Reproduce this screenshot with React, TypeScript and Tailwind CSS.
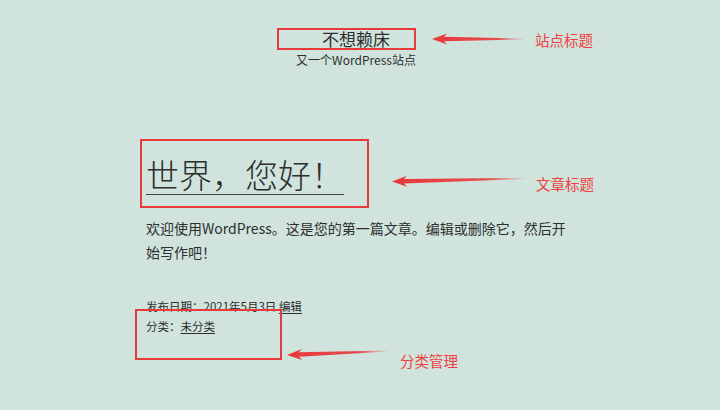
import React from 'react';

const RED = '#e8393b';

// hand-drawn style annotation arrow, tip on the left
function Arrow({ length, tilt = 0, id }: { length: number; tilt?: number; id: string }) {
  const h = 16;
  const mid = h / 2;
  return (
    <svg width={length} height={h} viewBox={`0 0 ${length} ${h}`} style={{ transform: `rotate(${tilt}deg)` }}>
      <defs>
        <linearGradient id={id} x1="0" x2="1" y1="0" y2="0">
          <stop offset="0" stopColor={RED} />
          <stop offset="0.7" stopColor={RED} stopOpacity="0.9" />
          <stop offset="1" stopColor={RED} stopOpacity="0" />
        </linearGradient>
      </defs>
      <path
        d={`M1 ${mid} L16 ${mid - 5.5} L13 ${mid - 2.2} L${length} ${mid - 0.5} L${length} ${mid + 0.5} L13 ${mid + 2.2} L16 ${mid + 5.5} Z`}
        fill={`url(#${id})`}
      />
    </svg>
  );
}

export default function App() {
  return (
    <div
      className="relative w-full h-[410px] overflow-hidden bg-[#d0e4dd] text-[#2e2e2e]"
      style={{ fontFamily: '"Noto Sans CJK SC", "Noto Sans", sans-serif' }}
    >
      <div className="ml-[146px] w-[420px]">
        {/* site header */}
        <header className="pt-[28px] text-center">
          <div className="text-[17px] leading-[21px]">不想赖床</div>
          <div className="mt-[3px] text-[12px] leading-[16px]">又一个WordPress站点</div>
        </header>

        {/* post */}
        <article className="mt-[86px]">
          <h1 className="text-[33px] leading-[40px] font-light">
            <a className="underline decoration-1 underline-offset-[6px] decoration-[#444]">世界，您好！</a>
          </h1>
          <p className="mt-[22px] text-[14px] leading-[24px]">
            欢迎使用WordPress。这是您的第一篇文章。编辑或删除它，然后开始写作吧！
          </p>
          <footer className="mt-[32px] text-[11.5px] leading-[20px]">
            <div>
              发布日期：2021年5月3日 <a className="underline underline-offset-2">编辑</a>
            </div>
            <div>
              分类：<a className="underline underline-offset-2">未分类</a>
            </div>
          </footer>
        </article>
      </div>

      {/* annotations */}
      <div className="absolute left-[277px] top-[28px] w-[139px] h-[22px] border-2 border-[#e8393b]" />
      <div className="absolute left-[431px] top-[31px]">
        <Arrow length={95} id="a1" />
      </div>
      <div className="absolute left-[535px] top-[30px] text-[14.5px] leading-[20px] text-[#ef4040]">站点标题</div>

      <div className="absolute left-[140px] top-[139px] w-[229px] h-[69px] border-2 border-[#e8393b]" />
      <div className="absolute left-[391px] top-[172px]">
        <Arrow length={137} tilt={-1.3} id="a2" />
      </div>
      <div className="absolute left-[536px] top-[174px] text-[14.5px] leading-[20px] text-[#ef4040]">文章标题</div>

      <div className="absolute left-[135px] top-[309px] w-[147px] h-[51px] border-2 border-[#e8393b]" />
      <div className="absolute left-[286px] top-[345px]">
        <Arrow length={103} tilt={-2.3} id="a3" />
      </div>
      <div className="absolute left-[400px] top-[351px] text-[14.5px] leading-[20px] text-[#ef4040]">分类管理</div>
    </div>
  );
}
